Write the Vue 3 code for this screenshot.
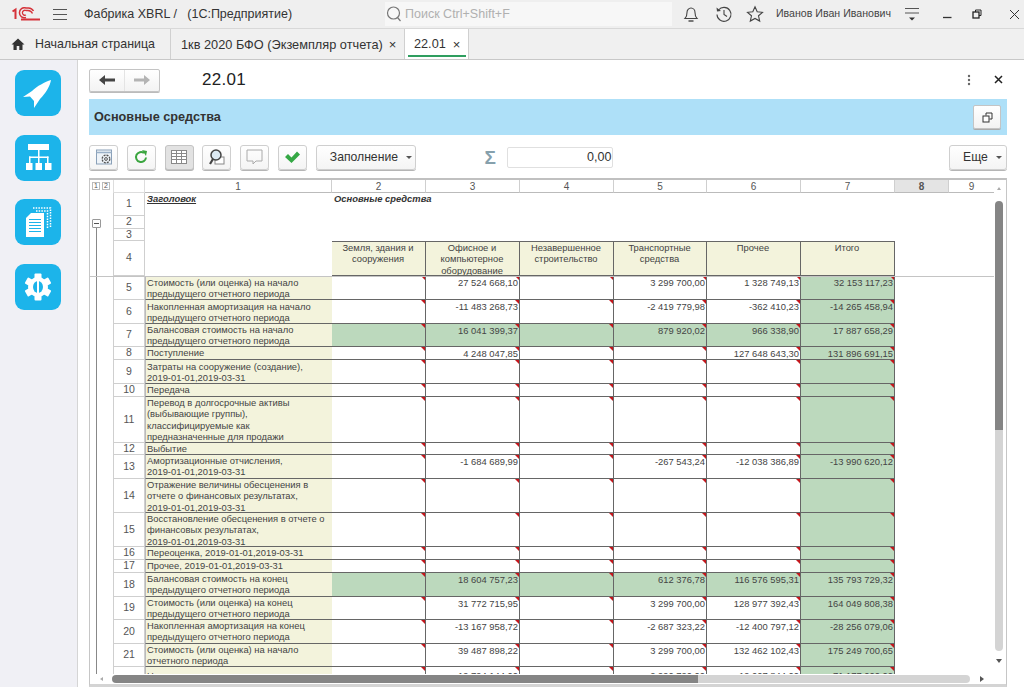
<script setup>
const cols = [2, 3, 4, 5, 6, 7]
const colNames = [1, 2, 3, 4, 5, 6, 7, 8, 9]
const heads = ['Земля, здания и сооружения', 'Офисное и компьютерное оборудование', 'Незавершенное строительство', 'Транспортные средства', 'Прочее', 'Итого']
const empty = ['', '', '', '', '', '']

const rows = [
  { n: 5, h: 24, t: 'Стоимость (или оценка) на начало\nпредыдущего отчетного периода', lo: true, v: ['', '27 524 668,10', '', '3 299 700,00', '1 328 749,13', '32 153 117,23'] },
  { n: 6, h: 24, t: 'Накопленная амортизация на начало\nпредыдущего отчетного периода', lo: true, v: ['', '-11 483 268,73', '', '-2 419 779,98', '-362 410,23', '-14 265 458,94'] },
  { n: 7, h: 23, t: 'Балансовая стоимость на начало\nпредыдущего отчетного периода', all: true, v: ['', '16 041 399,37', '', '879 920,02', '966 338,90', '17 887 658,29'] },
  { n: 8, h: 13, t: 'Поступление', v: ['', '4 248 047,85', '', '', '127 648 643,30', '131 896 691,15'] },
  { n: 9, h: 24, t: 'Затраты на сооружение (создание),\n2019-01-01,2019-03-31', lo: true, v: empty },
  { n: 10, h: 13, t: 'Передача', v: empty },
  { n: 11, h: 46, t: 'Перевод в долгосрочные активы\n(выбывающие группы),\nклассифицируемые как\nпредназначенные для продажи', v: empty },
  { n: 12, h: 12, t: 'Выбытие', v: empty },
  { n: 13, h: 24, t: 'Амортизационные отчисления,\n2019-01-01,2019-03-31', v: ['', '-1 684 689,99', '', '-267 543,24', '-12 038 386,89', '-13 990 620,12'] },
  { n: 14, h: 34, t: 'Отражение величины обесценения в\nотчете о финансовых результатах,\n2019-01-01,2019-03-31', v: empty },
  { n: 15, h: 34, t: 'Восстановление обесценения в отчете о\nфинансовых результатах,\n2019-01-01,2019-03-31', v: empty },
  { n: 16, h: 13, t: 'Переоценка, 2019-01-01,2019-03-31', v: empty },
  { n: 17, h: 13, t: 'Прочее, 2019-01-01,2019-03-31', v: empty },
  { n: 18, h: 24, t: 'Балансовая стоимость на конец\nпредыдущего отчетного периода', all: true, v: ['', '18 604 757,23', '', '612 376,78', '116 576 595,31', '135 793 729,32'] },
  { n: 19, h: 23, t: 'Стоимость (или оценка) на конец\nпредыдущего отчетного периода', v: ['', '31 772 715,95', '', '3 299 700,00', '128 977 392,43', '164 049 808,38'] },
  { n: 20, h: 24, t: 'Накопленная амортизация на конец\nпредыдущего отчетного периода', v: ['', '-13 167 958,72', '', '-2 687 323,22', '-12 400 797,12', '-28 256 079,06'] },
  { n: 21, h: 23, t: 'Стоимость (или оценка) на начало\nотчетного периода', v: ['', '39 487 898,22', '', '3 299 700,00', '132 462 102,43', '175 249 700,65'] },
  { n: 22, h: 24, t: 'Накопленная амортизация на начало\nотчетного периода', tail: true, v: ['', '-19 794 144,00', '', '-2 990 720,00', '-19 007 844,00', '-71 177 000,00'] },
]
const rowTemplate = '13px 23px 13px 12px 35px ' + rows.map(r => r.h + 'px').join(' ')
const teeth = [0, 60, 120, 180, 240, 300]
</script>

<template>
  <div class="app">
    <header class="top">
      <svg class="logo" viewBox="0 0 28 14" width="28" height="14">
        <path d="M0.500 4.500L3.500 2.500V12" fill="none" stroke="#d5333a" stroke-width="2"/>
        <path d="M14 10.500a5 5 0 1 1 0-9.500h2.500a6 6 0 0 1 5 3" fill="none" stroke="#d5333a" stroke-width="1.500"/>
        <path d="M14 8a2.500 2.500 0 1 1 0-4.500h2a5 5 0 0 1 4.500 3" fill="none" stroke="#d5333a" stroke-width="1.300"/>
        <path d="M9 12.500h19" stroke="#d5333a" stroke-width="2"/>
      </svg>
      <div class="burger"><i></i><i></i><i></i></div>
      <div class="app-title">Фабрика XBRL /&nbsp;&nbsp; (1С:Предприятие)</div>
      <div class="search">
        <svg width="18" height="18" viewBox="0 0 18 18"><circle cx="8.500" cy="8" r="6" fill="none" stroke="#777" stroke-width="1.200"/><path d="M12.500 12.500l3 3.500" stroke="#777" stroke-width="1.200"/></svg>
        <span>Поиск Ctrl+Shift+F</span>
      </div>
      <div class="top-right">
        <svg class="ti bell" viewBox="0 0 16 18" width="16" height="18"><path d="M2 13.500c1.500-1.500 2-3 2-6 0-2.500 1.700-4.500 4-4.500s4 2 4 4.500c0 3 .5 4.500 2 6z" fill="none" stroke="#444" stroke-width="1.100"/><path d="M5.500 16h5" stroke="#444" stroke-width="1.400"/></svg>
        <svg class="ti hist" viewBox="0 0 18 18" width="18" height="18"><path d="M3.500 5A7 7 0 1 1 2 9.500" fill="none" stroke="#444" stroke-width="1.100"/><path d="M1.500 2.500l.5 4 4-.5z" fill="#444"/><path d="M9 5v4.500l3 2" fill="none" stroke="#444" stroke-width="1.100"/></svg>
        <svg class="ti star" viewBox="0 0 18 18" width="18" height="18"><path d="M9 1.800l2.200 4.900 5.300.6-4 3.500 1.200 5.300L9 13.400l-4.700 2.700 1.200-5.300-4-3.500 5.300-.6z" fill="none" stroke="#444" stroke-width="1.100"/></svg>
        <span class="user">Иванов Иван Иванович</span>
        <svg class="ti filt" viewBox="0 0 16 14" width="16" height="14"><path d="M1 1.500h14M1 6h14" stroke="#555" stroke-width="1"/><path d="M5 10.500h6l-3 3z" fill="#333"/></svg>
        <svg class="ti min" viewBox="0 0 10 10" width="10" height="10"><path d="M1 8.500h8.500" stroke="#333" stroke-width="1.300"/></svg>
        <svg class="ti rest" viewBox="0 0 10 10" width="10" height="10"><rect x="1" y="3" width="6" height="6" fill="none" stroke="#222" stroke-width="1.300"/><path d="M3.500 3V1h5.500v5.500H7" fill="none" stroke="#222" stroke-width="1"/></svg>
        <svg class="ti close" viewBox="0 0 11 11" width="11" height="11"><path d="M1 1l9 9M10 1l-9 9" stroke="#333" stroke-width="1"/></svg>
      </div>
    </header>

    <nav class="tabs">
      <div class="tab home">
        <svg width="14" height="12" viewBox="0 0 14 12"><path d="M7 .5L.5 6.500h2V12h3.200V8h2.600v4h3.200V6.500h2z" fill="#333"/></svg>
        <span>Начальная страница</span>
      </div>
      <div class="tab doc"><span>1кв 2020 БФО (Экземпляр отчета)</span><b>×</b></div>
      <div class="tab active"><span>22.01</span><b>×</b></div>
    </nav>

    <div class="body">
      <aside class="side">
        <div class="tile">
          <svg viewBox="0 0 46 46" width="46" height="46"><path d="M36 10C30 12 22 16 17 21L8 27l7-.5 4 4.500V38l6-9C31 23 35 16 36 10z" fill="#fff"/></svg>
        </div>
        <div class="tile">
          <svg viewBox="0 0 46 46" width="46" height="46"><g fill="#fff"><rect x="13" y="9" width="21" height="6"/><rect x="23" y="15" width="1.500" height="13"/><rect x="14" y="21.500" width="19.500" height="1.500"/><rect x="14" y="21.500" width="1.500" height="7"/><rect x="32" y="21.500" width="1.500" height="7"/><rect x="11" y="28" width="6.500" height="7"/><rect x="20.500" y="28" width="6.500" height="7"/><rect x="30" y="28" width="6.500" height="7"/></g></svg>
        </div>
        <div class="tile">
          <svg viewBox="0 0 46 46" width="46" height="46"><path d="M18 9h17.500v20" fill="none" stroke="#fff" stroke-width="1.500" stroke-dasharray="1.500 1.200"/><path d="M21 12h11.500v18" fill="none" stroke="#fff" stroke-width="1.500" stroke-dasharray="1.500 1.200"/><path d="M11 19l5-5h13v24H11z" fill="#fff"/><path d="M14 20.500h12M14 23.500h12M14 26.500h12M14 29.500h12M14 32.500h12" stroke="#1cb4ea" stroke-width="1.100"/></svg>
        </div>
        <div class="tile">
          <svg viewBox="0 0 46 46" width="46" height="46">
            <g fill="#fff">
              <circle cx="23" cy="23" r="10"/>
              <rect v-for="a in teeth" :key="a" x="19.500" y="9.500" width="7" height="6" rx="1" :transform="`rotate(${a} 23 23)`"/>
            </g>
            <ellipse cx="23" cy="23" rx="5" ry="6" fill="#1cb4ea"/>
            <rect x="22" y="17" width="2" height="12" fill="#fff"/>
          </svg>
        </div>
      </aside>

      <main class="main">
        <div class="form-head">
          <div class="navbtns">
            <button class="nb">
              <svg width="16" height="10" viewBox="0 0 16 10"><path d="M6 0L0 5l6 5V6.500h10v-3H6z" fill="#444"/></svg>
            </button>
            <button class="nb">
              <svg width="16" height="10" viewBox="0 0 16 10"><path d="M10 0l6 5-6 5V6.500H0v-3h10z" fill="#b4b4b4"/></svg>
            </button>
          </div>
          <h1 class="doc-title">22.01</h1>
          <div class="head-right">
            <svg width="4" height="12" viewBox="0 0 4 12"><circle cx="2" cy="2" r="1.200" fill="#666"/><circle cx="2" cy="6" r="1.200" fill="#666"/><circle cx="2" cy="10" r="1.200" fill="#666"/></svg>
            <svg width="9" height="9" viewBox="0 0 9 9"><path d="M1 1l7 7M8 1L1 8" stroke="#222" stroke-width="1.500"/></svg>
          </div>
        </div>

        <div class="band">
          <span>Основные средства</span>
          <button class="band-btn">
            <svg width="11" height="11" viewBox="0 0 11 11"><rect x="1" y="4" width="6" height="6" fill="#fff" stroke="#333" stroke-width="1"/><path d="M4 3.500V1h6v6H7.500" fill="none" stroke="#333" stroke-width="1"/></svg>
          </button>
        </div>

        <div class="tools">
          <button class="tb">
            <svg width="18" height="18" viewBox="0 0 18 18"><rect x="1.500" y="2" width="15" height="14" fill="#eef3f8" stroke="#8aa0b8"/><path d="M1.500 4.500h15" stroke="#9ab0c8" stroke-width="1.500"/><circle cx="11" cy="11" r="3.800" fill="none" stroke="#555" stroke-width="1.300" stroke-dasharray="2 1"/><circle cx="11" cy="11" r="1.400" fill="none" stroke="#555"/></svg>
          </button>
          <button class="tb">
            <svg width="16" height="16" viewBox="0 0 16 16"><path d="M13 8.500A5 5 0 1 1 11 4" fill="none" stroke="#3aa53f" stroke-width="2"/><path d="M9 1l5 1-1 5z" fill="#3aa53f"/></svg>
          </button>
          <button class="tb on">
            <svg width="16" height="14" viewBox="0 0 16 14"><rect x=".5" y=".5" width="15" height="13" fill="#fff" stroke="#888"/><path d="M.5 3.500h15M.5 6.500h15M.5 9.500h15M5.500.5v13M10.500.5v13" stroke="#888"/></svg>
          </button>
          <button class="tb">
            <svg width="18" height="18" viewBox="0 0 18 18"><rect x="7" y="9" width="9" height="7" fill="#fff" stroke="#888"/><circle cx="8" cy="7" r="5" fill="#dce9f2" stroke="#444" stroke-width="1.500"/><path d="M5 11l-3 5" stroke="#444" stroke-width="2.200"/></svg>
          </button>
          <button class="tb">
            <svg width="17" height="16" viewBox="0 0 17 16"><path d="M1 1h15v11h-6l-3 3v-3H1z" fill="none" stroke="#aaa"/></svg>
          </button>
          <button class="tb">
            <svg width="17" height="14" viewBox="0 0 17 14"><path d="M1 7l3-3 3.500 3.500L13 1.500 16 4.500 7.500 13z" fill="#35a845"/></svg>
          </button>
          <button class="fill">Заполнение<i class="caret"></i></button>
          <span class="sigma">Σ</span>
          <div class="sum">0,00</div>
          <button class="fill more">Еще<i class="caret"></i></button>
        </div>

        <div class="sheet">
          <div class="outline">
            <div class="levels"><i>1</i><i>2</i></div>
            <div class="minus"></div>
            <div class="tree"></div>
          </div>
          <div class="grid" :style="{ gridTemplateRows: rowTemplate }">
            <div class="corner"></div>
            <div v-for="c in colNames" :key="c" class="ch" :class="{ sel: c === 8 }">{{ c }}</div>

            <template v-for="(h, i) in [23, 13, 12, 35]" :key="'rn' + i">
              <div class="rh" :style="{ gridRow: i + 2 }">{{ i + 1 }}</div>
            </template>
            <div class="title-a">Заголовок</div>
            <div class="title-b">Основные средства</div>
            <div v-for="(h, i) in heads" :key="h" class="hd" :style="{ gridColumn: i + 3 }">{{ h }}</div>

            <template v-for="r in rows" :key="r.n">
              <div class="rh">{{ r.n }}</div>
              <div class="lab" :class="{ lo: r.lo, tail: r.tail }">{{ r.t }}</div>
              <div v-for="(v, i) in r.v" :key="i" class="val" :class="{ green: r.all || cols[i] === 7, tail: r.tail }">{{ v }}</div>
              <div class="blank"></div>
              <div class="blank"></div>
            </template>
          </div>
          <div class="sep"></div>
          <div class="vbar"><span class="up"></span><span class="vthumb"></span><span class="down"></span></div>
          <div class="hbar"><span class="lt"></span><span class="hthumb"></span><span class="rt"></span></div>
        </div>
      </main>
    </div>
  </div>
</template>

<style scoped>
.app { width: 1024px; height: 687px; overflow: hidden; display: flex; flex-direction: column; background: #fff; font-family: "Liberation Sans", Arial, sans-serif; color: #333; }
.top { height: 29px; flex: none; display: flex; align-items: center; background: #efefef; border-bottom: 1px solid #d8d8d8; box-sizing: border-box; padding-left: 12px; }
.logo { flex: none; }
.burger { margin-left: 13px; width: 14px; display: flex; flex-direction: column; gap: 4px; }
.burger i { display: block; height: 1px; background: #555; }
.app-title { margin-left: 17px; font-size: 12.5px; color: #333; width: 301px; white-space: nowrap; }
.search { width: 287px; height: 24px; background: #f7f7f7; display: flex; align-items: center; gap: 2px; font-size: 12.5px; color: #b0b0b0; }
.top-right { flex: 1; position: relative; height: 28px; display: flex; align-items: center; }
.bell { margin-left: 11px; }
.hist { margin-left: 16px; }
.star { margin-left: 13px; }
.user { margin-left: 12px; margin-top: -2px; font-size: 10.6px; color: #444; white-space: nowrap; }
.filt { margin-left: 13px; }
.min { margin-left: 22px; }
.rest { margin-left: 20px; }
.close { margin-left: 27px; }

.tabs { height: 31px; flex: none; display: flex; background: #f0f0f0; border-bottom: 1px solid #c8c8c8; box-sizing: border-box; font-size: 12.4px; color: #333; }
.tab { display: flex; align-items: center; height: 100%; box-sizing: border-box; white-space: nowrap; }
.tab b { font-weight: 400; font-size: 13px; color: #333; }
.home { width: 171px; padding-left: 11px; gap: 10px; border-right: 1px solid #d0d0d0; }
.doc { width: 234px; padding-left: 10px; border-right: 1px solid #d0d0d0; font-size: 12.75px; }
.doc b { margin-left: 6px; }
.active { width: 64px; padding-left: 9px; background: #fff; border-right: 1px solid #d0d0d0; position: relative; font-size: 12.7px; }
.active b { margin-left: 7px; }
.active::after { content: ""; position: absolute; left: 3px; right: 2px; bottom: 2px; height: 2px; background: #2f9e5f; }

.body { flex: 1; display: flex; min-height: 0; }
.side { width: 78px; flex: none; background: #f0f0f5; border-right: 1px solid #d5d5d5; box-sizing: border-box; padding: 10px 0 0 15px; display: flex; flex-direction: column; gap: 18.6px; }
.tile { width: 46px; height: 46px; background: #1cb4ea; border-radius: 9px; flex: none; }
.tile svg { display: block; }
.main { flex: 1; min-width: 0; padding: 0 17px 0 11px; display: flex; flex-direction: column; }

.form-head { height: 39px; flex: none; display: flex; align-items: center; }
.navbtns { width: 71px; height: 23px; margin-top: 1px; display: flex; border: 1px solid #c4c4c4; border-radius: 2px; background: linear-gradient(#fff, #f3f3f3); box-sizing: border-box; box-shadow: 0 1px 0 #bbb; }
.nb { flex: 1; border: 0; background: none; padding: 0; display: flex; align-items: center; justify-content: center; }
.nb:first-child { border-right: 1px solid #e4e4e4; }
.doc-title { margin: 0 0 0 42px; font-size: 17px; font-weight: 400; color: #222; letter-spacing: .3px; }
.head-right { margin-left: auto; margin-right: 4px; width: 36px; display: flex; align-items: center; justify-content: space-between; }

.band { height: 36px; flex: none; background: #aee0f8; display: flex; align-items: center; justify-content: space-between; padding: 0 6px 0 5px; box-sizing: border-box; font-size: 12.7px; font-weight: 700; color: #333; }
.band-btn { width: 28px; height: 24px; background: linear-gradient(#fff, #f2f2f2); border: 1px solid #c4c4c4; border-radius: 2px; display: flex; align-items: center; justify-content: center; padding: 0; box-shadow: 0 1px 0 #aaa; }

.tools { height: 26px; margin-top: 9px; flex: none; display: flex; align-items: center; gap: 8.8px; }
.tb { width: 29px; height: 25px; padding: 0; border: 1px solid #cfcfcf; border-radius: 3px; background: linear-gradient(#fff, #f4f4f4); box-shadow: 0 1px 0 #b5b5b5; display: flex; align-items: center; justify-content: center; box-sizing: border-box; flex: none; }
.tb.on { background: #e2e2e2; border-color: #c4c4c4; }
.fill { width: 100px; height: 25px; padding: 0 0 0 13px; border: 1px solid #cfcfcf; border-radius: 3px; background: linear-gradient(#fff, #f4f4f4); box-shadow: 0 1px 0 #b5b5b5; font: 12.2px "Liberation Sans", Arial, sans-serif; color: #333; display: flex; align-items: center; gap: 8px; box-sizing: border-box; flex: none; }
.caret { width: 0; height: 0; border: 3px solid transparent; border-top-color: #555; border-bottom: 0; }
.sigma { margin-left: 60px; font-size: 19px; font-weight: 700; color: #86a0ac; width: 17px; line-height: 1; }
.sum { margin-left: -3px; width: 106px; height: 21px; border: 1px solid #e0e0e0; border-radius: 2px; box-sizing: border-box; text-align: right; font-size: 12.5px; line-height: 19px; padding-right: 1px; color: #333; }
.more { margin-left: auto; width: 58px; padding-left: 13px; }

.sheet { margin-top: 8px; flex: 1; min-height: 0; position: relative; display: flex; border: 1px solid #c6c6c6; border-top: 2px solid #c0c0c0; border-bottom: 3px solid #d4d4d4; overflow: hidden; box-sizing: border-box; }
.outline { width: 23px; flex: none; position: relative; }
.levels { height: 13px; display: flex; gap: 2px; padding: 2px 0 0 2px; box-sizing: border-box; }
.levels i { width: 8px; height: 8px; border: 1px solid #bbb; box-sizing: border-box; font-style: normal; font-size: 7px; line-height: 6px; text-align: center; color: #555; }
.minus { position: absolute; left: 2px; top: 39px; width: 9px; height: 9px; border: 1px solid #999; box-sizing: border-box; border-radius: 1px; background: linear-gradient(#555, #555) center / 5px 1px no-repeat; }
.tree { position: absolute; left: 6px; top: 48px; bottom: 0; width: 1px; background: #888; }

.grid { display: grid; grid-template-columns: 32px 187px 94px 94px 94px 93px 94px 94px 54px 46px; flex: none; align-content: start; font-size: 9.4px; line-height: 11.3px; color: #444; }
.corner { background: #fff; border: 1px solid #ddd; border-top: 0; box-sizing: border-box; }
.ch { border-right: 1px solid #cfcfcf; border-bottom: 1px solid #bbb; text-align: center; font-size: 10px; line-height: 13px; color: #555; box-sizing: border-box; }
.ch.sel { background: #e4e4e4; font-weight: 700; }
.rh { grid-column: 1; display: flex; align-items: center; justify-content: center; border: 1px solid #cfcfcf; border-width: 0 1px 1px 1px; box-sizing: border-box; font-size: 10.5px; color: #555; }
.title-a { grid-column: 2; grid-row: 2 / 6; font-weight: 700; font-style: italic; text-decoration: underline; padding: 0 2px; color: #333; }
.title-b { grid-column: 3 / 9; grid-row: 2 / 5; font-weight: 700; font-style: italic; padding: 0 2px; color: #333; }
.hd { grid-row: 5; background: #f3f3dc; border: 1px solid #666; border-left: 0; box-sizing: border-box; text-align: center; padding: 0 5px 0 4px; overflow: hidden; }
.lab { background: #f3f3dc; padding: 0 1px; border-bottom: 1px solid #666; box-sizing: border-box; overflow: hidden; border-left: 1px solid #bbb; white-space: pre-line; }
.lab.lo { padding-top: 1px; }
.lab.tail { padding-top: 3px; }
.val { position: relative; background: #fff; border-right: 1px solid #666; border-bottom: 1px solid #666; box-sizing: border-box; text-align: right; padding: 1px 1px 0 0; white-space: nowrap; overflow: hidden; }
.val.tail { padding-top: 3px; }
.val::after { content: ""; position: absolute; right: 0; top: 0; border: 2.5px solid #c4161c; border-left-color: transparent; border-bottom-color: transparent; }
.val.green { background: #bcd9bd; }
.blank { background: #fff; }
.sep { position: absolute; left: 0; right: 12px; top: 96px; height: 1px; background: #c4c4c4; }
.vbar { position: absolute; right: 3px; top: 0; bottom: 10px; width: 9px; background: #fff; }
.vbar .vthumb { position: absolute; top: 21px; height: 450px; left: 1px; width: 8px; border-radius: 4px; background: linear-gradient(#858585 0 51%, #d4d4d4 51%); }
.up { position: absolute; top: 7px; left: 3px; border: 2px solid transparent; border-bottom: 3px solid #aaa; border-top: 0; }
.down { position: absolute; top: 479px; left: 2px; border: 3px solid transparent; border-top: 4px solid #555; border-bottom: 0; }
.hbar { position: absolute; left: 0; right: 0; bottom: 0; height: 10px; background: #fff; }
.hbar .hthumb { position: absolute; left: 22px; top: 1px; width: 858px; height: 8px; border-radius: 4px; background: linear-gradient(90deg, #858585 0 68.3%, #d4d4d4 68.3%); }
.lt { position: absolute; left: 10px; top: 3px; border: 2px solid transparent; border-right: 3px solid #aaa; border-left: 0; }
.rt { position: absolute; right: 22px; top: 2px; border: 3px solid transparent; border-left: 4px solid #555; border-right: 0; }
</style>
